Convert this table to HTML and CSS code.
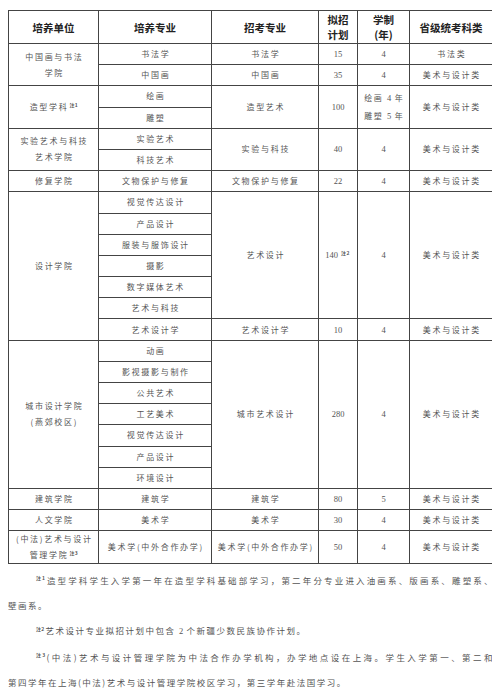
FILE: index.html
```html
<!DOCTYPE html>
<html lang="zh-CN">
<head>
<meta charset="utf-8">
<title>招生计划</title>
<link rel="stylesheet" href="styles.css">
</head>
<body>
<table class="plan">
  <colgroup>
    <col class="c1"><col class="c2"><col class="c3"><col class="c4"><col class="c5"><col class="c6">
  </colgroup>
  <thead>
    <tr class="hd">
      <th>培养单位</th><th>培养专业</th><th>招考专业</th><th>拟招<br>计划</th><th>学制<br>(年)</th><th>省级统考科类</th>
    </tr>
  </thead>
  <tbody>
    <tr>
      <td rowspan="2">中国画与书法<br>学院</td><td>书法学</td><td>书法学</td><td class="num">15</td><td class="num">4</td><td>书法类</td>
    </tr>
    <tr>
      <td>中国画</td><td>中国画</td><td class="num">35</td><td class="num">4</td><td>美术与设计类</td>
    </tr>
    <tr>
      <td rowspan="2">造型学科<sup class="n">注1</sup></td><td>绘画</td><td rowspan="2">造型艺术</td><td rowspan="2" class="num">100</td><td rowspan="2" class="two">绘画 <span class="d">4</span> 年<br>雕塑 <span class="d">5</span> 年</td><td rowspan="2">美术与设计类</td>
    </tr>
    <tr>
      <td>雕塑</td>
    </tr>
    <tr>
      <td rowspan="2">实验艺术与科技<br>艺术学院</td><td>实验艺术</td><td rowspan="2">实验与科技</td><td rowspan="2" class="num">40</td><td rowspan="2" class="num">4</td><td rowspan="2">美术与设计类</td>
    </tr>
    <tr>
      <td>科技艺术</td>
    </tr>
    <tr>
      <td>修复学院</td><td>文物保护与修复</td><td>文物保护与修复</td><td class="num">22</td><td class="num">4</td><td>美术与设计类</td>
    </tr>
    <tr>
      <td rowspan="7">设计学院</td><td>视觉传达设计</td><td rowspan="6">艺术设计</td><td rowspan="6" class="num">140<sup class="n gap">注2</sup></td><td rowspan="6" class="num">4</td><td rowspan="6">美术与设计类</td>
    </tr>
    <tr><td>产品设计</td></tr>
    <tr><td>服装与服饰设计</td></tr>
    <tr><td>摄影</td></tr>
    <tr><td>数字媒体艺术</td></tr>
    <tr><td>艺术与科技</td></tr>
    <tr>
      <td>艺术设计学</td><td>艺术设计学</td><td class="num">10</td><td class="num">4</td><td>美术与设计类</td>
    </tr>
    <tr>
      <td rowspan="7">城市设计学院<br>(燕郊校区)</td><td>动画</td><td rowspan="7">城市艺术设计</td><td rowspan="7" class="num">280</td><td rowspan="7" class="num">4</td><td rowspan="7">美术与设计类</td>
    </tr>
    <tr><td>影视摄影与制作</td></tr>
    <tr><td>公共艺术</td></tr>
    <tr><td>工艺美术</td></tr>
    <tr><td>视觉传达设计</td></tr>
    <tr><td>产品设计</td></tr>
    <tr><td>环境设计</td></tr>
    <tr>
      <td>建筑学院</td><td>建筑学</td><td>建筑学</td><td class="num">80</td><td class="num">5</td><td>美术与设计类</td>
    </tr>
    <tr>
      <td>人文学院</td><td>美术学</td><td>美术学</td><td class="num">30</td><td class="num">4</td><td>美术与设计类</td>
    </tr>
    <tr class="tall">
      <td>(中法)艺术与设计<br>管理学院<sup class="n">注3</sup></td><td>美术学(中外合作办学)</td><td>美术学(中外合作办学)</td><td class="num">50</td><td class="num">4</td><td>美术与设计类</td>
    </tr>
  </tbody>
</table>

<div class="notes">
  <p class="note"><span class="ln first"><sup class="n">注1</sup>造型学科学生入学第一年在造型学科基础部学习，第二年分专业进入油画系、版画系、雕塑系、</span><span class="ln">壁画系。</span></p>
  <p class="note"><span class="ln"><sup class="n">注2</sup>艺术设计专业拟招计划中包含 <span class="d">2</span> 个新疆少数民族协作计划。</span></p>
  <p class="note"><span class="ln first"><sup class="n">注3</sup>(中法)艺术与设计管理学院为中法合作办学机构，办学地点设在上海。学生入学第一、第二和</span><span class="ln">第四学年在上海(中法)艺术与设计管理学院校区学习，第三学年赴法国学习。</span></p>
</div>
</body>
</html>
```

FILE: styles.css
```css
html, body {
  background: #ffffff;
}

body {
  margin: 10px 8px 0;
  font-family: "Noto Sans CJK SC", "Noto Sans", sans-serif;
  color: #555555;
}

.plan {
  border-collapse: collapse;
  table-layout: fixed;
  width: 484px;
}

.c1 { width: 90px; }
.c2 { width: 113px; }
.c3 { width: 107px; }
.c4 { width: 39px; }
.c5 { width: 52px; }
.c6 { width: 83px; }

.plan th,
.plan td {
  border: 1px solid #444444;
  padding: 0;
  text-align: center;
  vertical-align: middle;
}

.plan tr.hd {
  height: 33px;
}

.plan th {
  font-size: 10.5px;
  font-weight: 700;
  color: #222222;
  line-height: 15px;
}

.plan tbody tr {
  height: 21.2px;
}

.plan tbody tr.tall {
  height: 32.6px;
}

.plan td {
  font-size: 8px;
  letter-spacing: 1.7px;
  padding-left: 1.7px;
  line-height: 16px;
  white-space: nowrap;
}

.plan td.num {
  font-family: "Liberation Serif", serif;
  font-size: 8.5px;
  letter-spacing: 0;
  padding-left: 0;
}

.plan td.two {
  line-height: 17.5px;
}

.d {
  font-family: "Liberation Serif", serif;
  font-size: 8.5px;
  letter-spacing: 0;
}

sup.n {
  font-family: "Noto Sans CJK SC", sans-serif;
  font-size: 5px;
  font-weight: 700;
  letter-spacing: 0.3px;
  line-height: 0;
  vertical-align: 3.5px;
  margin-left: 1px;
  margin-right: 1px;
}

sup.n.gap {
  margin-left: 3px;
}

.notes {
  margin-top: 3.5px;
  width: 486px;
}

.note {
  margin: 0;
  font-size: 8.5px;
  letter-spacing: 1.5px;
  line-height: 25.3px;
  color: #555555;
  text-align: left;
}

.ln {
  display: block;
}

.note .ln:first-child {
  padding-left: 27px;
}

.ln.first {
  text-align: justify;
  text-align-last: justify;
}
```
